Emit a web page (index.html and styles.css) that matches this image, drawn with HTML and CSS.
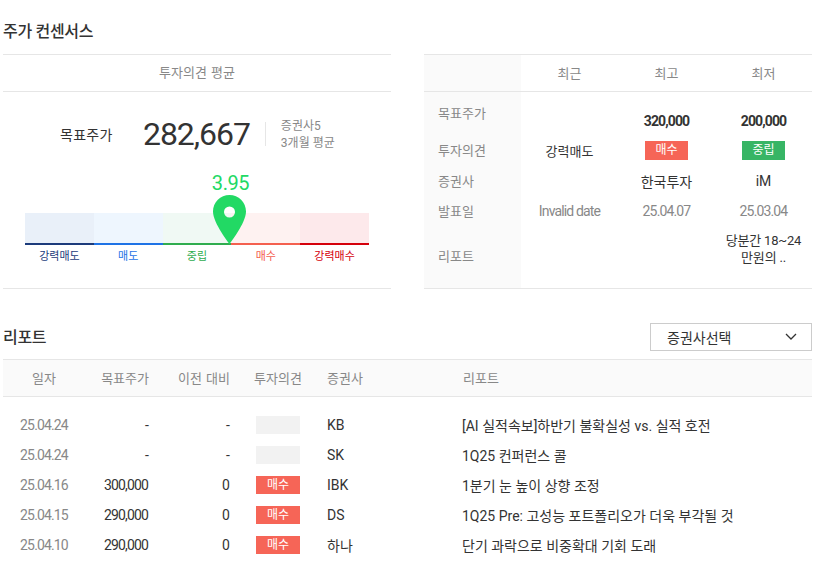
FILE: index.html
```html
<!DOCTYPE html>
<html lang="ko">
<head>
    <meta charset="UTF-8">
    <meta name="viewport" content="width=device-width, initial-scale=1.0">
    <title>주가 컨센서스</title>
    <link rel="stylesheet" href="styles.css">
</head>
<body>
    <section class="consensus">
        <h2 class="section-title">주가 컨센서스</h2>
        <div class="panels">
            <div class="panel">
                <div class="panel-head">투자의견 평균</div>
                <div class="summary">
                    <span class="summary-label">목표주가</span>
                    <span class="summary-price">282,667</span>
                    <div class="summary-note">
                        <div>증권사5</div>
                        <div>3개월 평균</div>
                    </div>
                </div>
                <div class="gauge">
                    <div class="gauge-marker">
                        <span class="gauge-value">3.95</span>
                        <svg class="gauge-pin" width="33" height="49" viewBox="0 0 33 49">
                            <path fill="#22d964" fill-rule="evenodd" d="M16.5 0C7.4 0 0 7.4 0 16.5C0 28 16.5 49 16.5 49S33 28 33 16.5C33 7.4 25.6 0 16.5 0ZM16.5 11.5a5.5 5.5 0 1 1 0 11a5.5 5.5 0 0 1 0-11Z"/>
                        </svg>
                    </div>
                    <div class="gauge-step step-1"><div class="gauge-bar"></div><span>강력매도</span></div>
                    <div class="gauge-step step-2"><div class="gauge-bar"></div><span>매도</span></div>
                    <div class="gauge-step step-3"><div class="gauge-bar"></div><span>중립</span></div>
                    <div class="gauge-step step-4"><div class="gauge-bar"></div><span>매수</span></div>
                    <div class="gauge-step step-5"><div class="gauge-bar"></div><span>강력매수</span></div>
                </div>
            </div>

            <table class="compare">
                <tr class="compare-head">
                    <th class="side"></th>
                    <th>최근</th>
                    <th>최고</th>
                    <th>최저</th>
                </tr>
                <tr class="row-price">
                    <th class="side">목표주가</th>
                    <td></td>
                    <td><b>320,000</b></td>
                    <td><b>200,000</b></td>
                </tr>
                <tr class="row-opinion">
                    <th class="side">투자의견</th>
                    <td>강력매도</td>
                    <td><span class="badge buy">매수</span></td>
                    <td><span class="badge hold">중립</span></td>
                </tr>
                <tr class="row-firm">
                    <th class="side">증권사</th>
                    <td></td>
                    <td>한국투자</td>
                    <td>iM</td>
                </tr>
                <tr class="row-date">
                    <th class="side">발표일</th>
                    <td>Invalid date</td>
                    <td>25.04.07</td>
                    <td>25.03.04</td>
                </tr>
                <tr class="row-report">
                    <th class="side">리포트</th>
                    <td></td>
                    <td></td>
                    <td>당분간 18~24<br>만원의 ..</td>
                </tr>
            </table>
        </div>
    </section>

    <section class="reports">
        <div class="reports-top">
            <h2 class="section-title">리포트</h2>
            <div class="select">
                <span>증권사선택</span>
                <svg width="12" height="7" viewBox="0 0 12 7"><path d="M1 1l5 5 5-5" fill="none" stroke="#333" stroke-width="1.3"/></svg>
            </div>
        </div>
        <div class="report-row report-head">
            <div class="c-date">일자</div>
            <div class="c-price">목표주가</div>
            <div class="c-prev">이전 대비</div>
            <div class="c-opinion">투자의견</div>
            <div class="c-firm">증권사</div>
            <div class="c-title">리포트</div>
        </div>
        <div class="report-list">
            <div class="report-row">
                <div class="c-date">25.04.24</div>
                <div class="c-price">-</div>
                <div class="c-prev">-</div>
                <div class="c-opinion"><span class="badge none"></span></div>
                <div class="c-firm">KB</div>
                <div class="c-title">[AI 실적속보]하반기 불확실성 vs. 실적 호전</div>
            </div>
            <div class="report-row">
                <div class="c-date">25.04.24</div>
                <div class="c-price">-</div>
                <div class="c-prev">-</div>
                <div class="c-opinion"><span class="badge none"></span></div>
                <div class="c-firm">SK</div>
                <div class="c-title">1Q25 컨퍼런스 콜</div>
            </div>
            <div class="report-row">
                <div class="c-date">25.04.16</div>
                <div class="c-price">300,000</div>
                <div class="c-prev">0</div>
                <div class="c-opinion"><span class="badge buy">매수</span></div>
                <div class="c-firm">IBK</div>
                <div class="c-title">1분기 눈 높이 상향 조정</div>
            </div>
            <div class="report-row">
                <div class="c-date">25.04.15</div>
                <div class="c-price">290,000</div>
                <div class="c-prev">0</div>
                <div class="c-opinion"><span class="badge buy">매수</span></div>
                <div class="c-firm">DS</div>
                <div class="c-title">1Q25 Pre: 고성능 포트폴리오가 더욱 부각될 것</div>
            </div>
            <div class="report-row">
                <div class="c-date">25.04.10</div>
                <div class="c-price">290,000</div>
                <div class="c-prev">0</div>
                <div class="c-opinion"><span class="badge buy">매수</span></div>
                <div class="c-firm">하나</div>
                <div class="c-title">단기 과락으로 비중확대 기회 도래</div>
            </div>
        </div>
    </section>
</body>
</html>
```

FILE: styles.css
```css
body {
    margin: 0;
    padding: 0 13px 0 3px;
    font-family: Roboto, "Noto Sans CJK KR", sans-serif;
    font-size: 13px;
    color: #333;
    background: #fff;
}

.section-title {
    margin: 0;
    padding-top: 2px;
    font-size: 16px;
    font-weight: 500;
    line-height: 20px;
    letter-spacing: -0.3px;
}

/* 주가 컨센서스 */
.consensus {
    padding-top: 20px;
}

.panels {
    display: flex;
    justify-content: space-between;
    margin-top: 12px;
}

.panel {
    width: 388px;
    height: 233px;
    border-top: 1px solid #e6e6e6;
    border-bottom: 1px solid #e6e6e6;
}

.panel-head {
    height: 36px;
    line-height: 36px;
    text-align: center;
    word-spacing: 1px;
    color: #888;
    border-bottom: 1px solid #e6e6e6;
}

.summary {
    display: flex;
    align-items: center;
    height: 84px;
}

.summary-label {
    width: 57px;
    margin-left: 57px;
    margin-right: 26px;
    font-size: 14px;
    letter-spacing: 0.3px;
}

.summary-price {
    position: relative;
    font-size: 32px;
    line-height: 40px;
    letter-spacing: -1.05px;
    padding-right: 16px;
    margin-right: 15px;
}

/* 가격 옆 구분선 */
.summary-price::after {
    content: "";
    position: absolute;
    right: 0;
    top: 8px;
    height: 24px;
    width: 1px;
    background: #e6e6e6;
}

.summary-note {
    padding-top: 1px;
    font-size: 12px;
    line-height: 17px;
    color: #888;
}

.gauge {
    position: relative;
    display: flex;
    margin: 37px 22px 0;
}

.gauge-marker {
    position: absolute;
    left: 188px;
    bottom: 21px;
    width: 33px;
    height: 49px;
}

.gauge-value {
    position: absolute;
    left: -11px;
    right: -13px;
    top: -24px;
    text-align: center;
    font-size: 20px;
    line-height: 24px;
    letter-spacing: -0.4px;
    color: #22d964;
}

.gauge-pin {
    display: block;
}

.gauge-step {
    flex: 1;
    text-align: center;
    font-size: 11px;
    line-height: 16px;
}

.gauge-bar {
    height: 30px;
    margin-bottom: 2px;
    border-bottom: 2px solid;
}

.gauge-step span {
    display: block;
    margin-top: 4px;
}

.step-1 { color: #1c3b7b; }
.step-1 .gauge-bar { background: #e9f0f9; }
.step-2 { color: #1e73e6; }
.step-2 .gauge-bar { background: #eef6fe; }
.step-3 { color: #30ad4f; }
.step-3 .gauge-bar { background: #f0f9f4; }
.step-4 { color: #f4604f; }
.step-4 .gauge-bar { background: #fef2f1; }
.step-5 { color: #d5000b; }
.step-5 .gauge-bar { background: #fde9eb; }

/* 최근 / 최고 / 최저 표 */
.compare {
    width: 388px;
    height: 235px;
    border-collapse: collapse;
    table-layout: fixed;
    border-top: 1px solid #e6e6e6;
    border-bottom: 1px solid #e6e6e6;
}

.compare th,
.compare td {
    padding: 0;
    font-weight: 400;
    text-align: center;
    vertical-align: middle;
}

.compare-head th {
    height: 37px;
    padding-bottom: 1px;
    box-sizing: border-box;
    color: #888;
    border-bottom: 1px solid #e6e6e6;
}

.compare th.side {
    width: 97px;
    background: #fafafa;
    text-align: left;
    padding-left: 14px;
    padding-bottom: 2px;
    box-sizing: border-box;
    color: #888;
}

.compare b {
    font-size: 14px;
    font-weight: 700;
    letter-spacing: -0.9px;
}

.row-price th,
.row-price td {
    height: 43px;
    box-sizing: border-box;
}
.compare .row-price th.side { vertical-align: top; padding-top: 11px; padding-bottom: 0; }
.compare .row-price td { vertical-align: bottom; padding-bottom: 6px; }

.row-opinion th,
.row-opinion td { height: 31px; }

.row-firm th,
.row-firm td { height: 31px; }

.row-firm td {
    font-size: 14px;
}

.row-date th,
.row-date td { height: 29px; }

.row-date td {
    font-size: 14px;
    letter-spacing: -0.85px;
    color: #888;
}

.compare .row-report td {
    line-height: 17px;
    letter-spacing: -0.2px;
    padding-bottom: 16px;
}

.badge {
    display: inline-block;
    width: 43px;
    height: 19px;
    line-height: 19px;
    font-size: 12px;
    text-align: center;
    color: #fff;
    vertical-align: middle;
}

.buy { background: #f66557; }
.hold { background: #37b565; }
.none { background: #f2f2f2; }

/* 리포트 */
.reports {
    margin-top: 33px;
}

.reports-top {
    display: flex;
    justify-content: space-between;
    align-items: center;
    height: 30px;
    margin-bottom: 7px;
}

.select {
    display: flex;
    justify-content: space-between;
    align-items: center;
    width: 162px;
    height: 28px;
    padding: 0 14px 1px 16px;
    box-sizing: border-box;
    border: 1px solid #ccc;
    font-size: 14px;
}

.report-row {
    display: grid;
    grid-template-columns: 82px 64px 81px 97px 136px 1fr;
    align-items: center;
    height: 30px;
    font-size: 14px;
}

.report-head {
    height: 34px;
    padding-bottom: 2px;
    font-size: 13px;
    word-spacing: 1px;
    color: #888;
    background: #fafafa;
    border-top: 1px solid #e6e6e6;
    border-bottom: 1px solid #e6e6e6;
}

.report-list {
    padding-top: 13px;
}

.c-date {
    text-align: center;
    color: #888;
}

.c-price,
.c-prev {
    text-align: right;
}

.report-list .c-date,
.report-list .c-price,
.report-list .c-prev {
    letter-spacing: -0.85px;
}

.report-list .c-price,
.report-list .c-prev {
    padding-right: 1px;
}

.report-list .c-title {
    margin-left: -1px;
}

.c-opinion {
    display: flex;
    padding-left: 26px;
}

.report-head .c-opinion {
    padding-left: 24px;
}

.c-opinion .badge {
    width: 44px;
    height: 18px;
    line-height: 18px;
}
```
